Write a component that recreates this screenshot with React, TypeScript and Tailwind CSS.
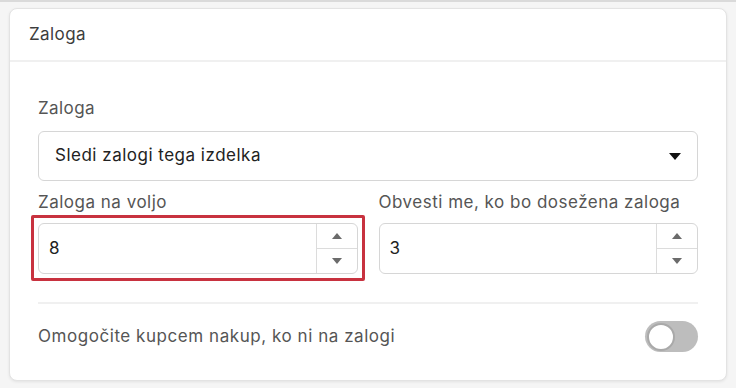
import React from "react";

function Spinner() {
  return (
    <div className="flex w-[41px] flex-col border-l border-[#dcdcdc]">
      <button className="flex flex-1 items-center justify-center border-b border-[#dcdcdc]">
        <svg width="10" height="6" viewBox="0 0 10 6">
          <path d="M0 6 L5 0 L10 6 Z" fill="#6b6b6b" />
        </svg>
      </button>
      <button className="flex flex-1 items-center justify-center">
        <svg width="10" height="6" viewBox="0 0 10 6">
          <path d="M0 0 L10 0 L5 6 Z" fill="#6b6b6b" />
        </svg>
      </button>
    </div>
  );
}

function NumberField({ value, highlight }: { value: string; highlight?: boolean }) {
  return (
    <div className="relative">
      <div className="flex h-[51px] overflow-hidden rounded-md border border-[#d6d6d6] bg-white">
        <div className="flex flex-1 items-center pl-[10px] text-[17px] text-[#222]">{value}</div>
        <Spinner />
      </div>
      {/* highlight frame drawn over the field */}
      {highlight && (
        <span className="pointer-events-none absolute -inset-x-[7px] -top-[8px] -bottom-[7px] rounded-[2px] border-[3px] border-[#c8323f]" />
      )}
    </div>
  );
}

export default function App() {
  return (
    <div
      className="h-[388px] w-[736px] border-t-2 border-[#dadada] bg-[#f5f5f5] px-[9px] pt-[6px]"
      style={{ fontFamily: "Inter, 'Open Sans', sans-serif" }}
    >
      <div className="w-[718px] rounded-lg border border-[#e3e3e3] bg-white shadow-[0_1px_3px_rgba(0,0,0,0.08)]">
        {/* header */}
        <div className="flex h-[53px] items-center border-b-2 border-[#f0f0f0] px-[19px] text-[17px] tracking-[0.4px] text-[#3d3d3d]">
          Zaloga
        </div>

        <div className="px-[28px] pb-[28px] pt-[34px]">
          <div className="mb-[11px] text-[17px] leading-6 tracking-[0.4px] text-[#555]">Zaloga</div>
          <div className="flex h-[50px] items-center justify-between rounded-md border border-[#d6d6d6] pl-4 pr-[16px] text-[17px] tracking-[0.5px] text-[#222]">
            <span>Sledi zalogi tega izdelka</span>
            <svg width="12" height="7" viewBox="0 0 12 7">
              <path d="M0 0 L12 0 L6 7 Z" fill="#111" />
            </svg>
          </div>

          <div className="mt-[9px] grid grid-cols-2 gap-x-[21px]">
            <div>
              <div className="mb-[9px] text-[17px] leading-6 tracking-[0.5px] text-[#555]">Zaloga na voljo</div>
              <NumberField value="8" highlight />
            </div>
            <div>
              <div className="mb-[9px] whitespace-nowrap text-[17px] leading-6 tracking-[0.5px] text-[#555]">
                Obvesti me, ko bo dosežena zaloga
              </div>
              <NumberField value="3" />
            </div>
          </div>

          <div className="mt-[28px] border-t-2 border-[#f0f0f0]" />

          <div className="mt-[17px] flex items-center justify-between">
            <span className="text-[17px] tracking-[0.55px] text-[#555]">Omogočite kupcem nakup, ko ni na zalogi</span>
            <button className="relative flex h-[31px] w-[53px] items-center rounded-full bg-[#bdbdbd] pl-[2px]">
              <span className="h-[28px] w-[28px] rounded-full border-2 border-[#a9a9a9] bg-white" />
            </button>
          </div>
        </div>
      </div>
    </div>
  );
}
